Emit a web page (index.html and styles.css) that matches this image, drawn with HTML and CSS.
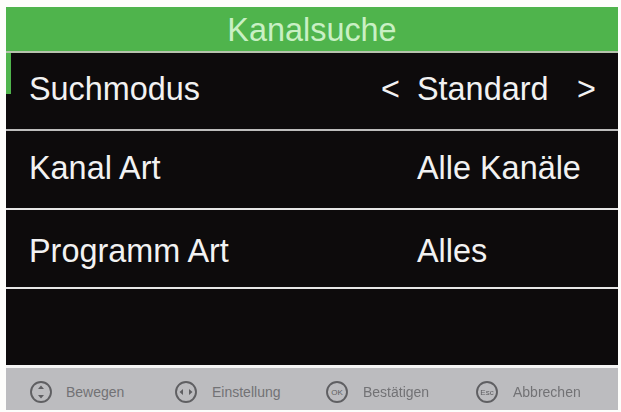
FILE: index.html
```html
<!DOCTYPE html>
<html lang="de">
<head>
    <meta charset="UTF-8">
    <meta name="viewport" content="width=device-width, initial-scale=1.0">
    <title>Kanalsuche</title>
    <link rel="stylesheet" href="styles.css">
</head>
<body>
    <main class="screen">
        <h1 class="title">Kanalsuche</h1>
        <div class="menu">
            <div class="row selected">
                <span class="label">Suchmodus</span>
                <span class="arrow">&lt;</span>
                <span class="value">Standard</span>
                <span class="arrow">&gt;</span>
            </div>
            <div class="row row-mid">
                <span class="label">Kanal Art</span>
                <span></span>
                <span class="value">Alle Kanäle</span>
            </div>
            <div class="row row-low">
                <span class="label">Programm Art</span>
                <span></span>
                <span class="value">Alles</span>
            </div>
            <div class="row empty"></div>
        </div>
        <footer class="hints">
            <div class="hint hint-move">
                <svg class="hint-icon" viewBox="0 0 24 24">
                    <circle cx="12" cy="12" r="10"/>
                    <path class="glyph" d="M12 5.5l3 3.5h-6zM12 18.5l3-3.5h-6z"/>
                </svg>
                <span>Bewegen</span>
            </div>
            <div class="hint hint-set">
                <svg class="hint-icon" viewBox="0 0 24 24">
                    <circle cx="12" cy="12" r="10"/>
                    <path class="glyph" d="M5.5 12l3.5-3v6zM18.5 12l-3.5-3v6z"/>
                </svg>
                <span>Einstellung</span>
            </div>
            <div class="hint hint-ok">
                <svg class="hint-icon" viewBox="0 0 24 24">
                    <circle cx="12" cy="12" r="10"/>
                    <text x="12" y="15" class="key">OK</text>
                </svg>
                <span>Bestätigen</span>
            </div>
            <div class="hint">
                <svg class="hint-icon" viewBox="0 0 24 24">
                    <circle cx="12" cy="12" r="10"/>
                    <text x="12" y="15" class="key">Esc</text>
                </svg>
                <span>Abbrechen</span>
            </div>
        </footer>
    </main>
</body>
</html>
```

FILE: styles.css
```css
* {
    margin: 0;
    padding: 0;
    box-sizing: border-box;
    font-family: "Liberation Sans", Arial, sans-serif;
}

body {
    width: 621px;
    height: 412px;
    overflow: hidden;
    background-color: #fdfdfb;
}

.screen {
    display: flex;
    flex-direction: column;
    height: 403px;
    margin: 7px 3px 2px 6px;
    filter: blur(0.45px);
}

.title {
    height: 44px;
    line-height: 46px;
    text-align: center;
    font-size: 32.4px;
    font-weight: 400;
    color: #c9f0c4;
    background-color: #4fb44c;
}

.menu {
    flex: 1;
    background-color: #0d0b0c;
    border-top: 2px solid #b6c2ad;
}

.row {
    position: relative;
    display: grid;
    grid-template-columns: 352px 36px 160px 30px;
    align-items: center;
    height: 79px;
    padding-left: 23px;
    padding-bottom: 4px;
    font-size: 32.4px;
    color: #f2f2f2;
    white-space: nowrap;
    border-bottom: 2px solid #e6e6e6;
}

.row.selected {
    height: 78px;
    border-bottom-color: #bdbdbd;
}

.row.selected::before {
    content: "";
    position: absolute;
    left: 0;
    top: 0;
    width: 5px;
    height: 41px;
    background-color: #4fb44c;
}

.row.row-mid {
    padding-bottom: 2px;
}

.row.row-low {
    padding-top: 5px;
    padding-bottom: 0;
}

.row.empty {
    height: 76px;
    border-bottom: none;
}

.hints {
    display: flex;
    align-items: center;
    height: 45px;
    padding-left: 23px;
    padding-top: 6px;
    font-size: 14px;
    color: #727275;
    background-color: #bcbcbf;
    border-top: 3px solid #f4f4f4;
}

.hint {
    display: flex;
    flex: none;
    align-items: center;
    gap: 14px;
    width: 150px;
}

.hint-move {
    gap: 13px;
    width: 145px;
}

.hint-set {
    width: 151px;
}

.hint-icon {
    width: 24px;
    height: 24px;
    flex-shrink: 0;
}

.hint-icon circle {
    fill: none;
    stroke: #5f5f62;
    stroke-width: 1.9;
}

.glyph {
    fill: #5f5f62;
}

.key {
    font-size: 8px;
    text-anchor: middle;
    fill: #5f5f62;
}
```
